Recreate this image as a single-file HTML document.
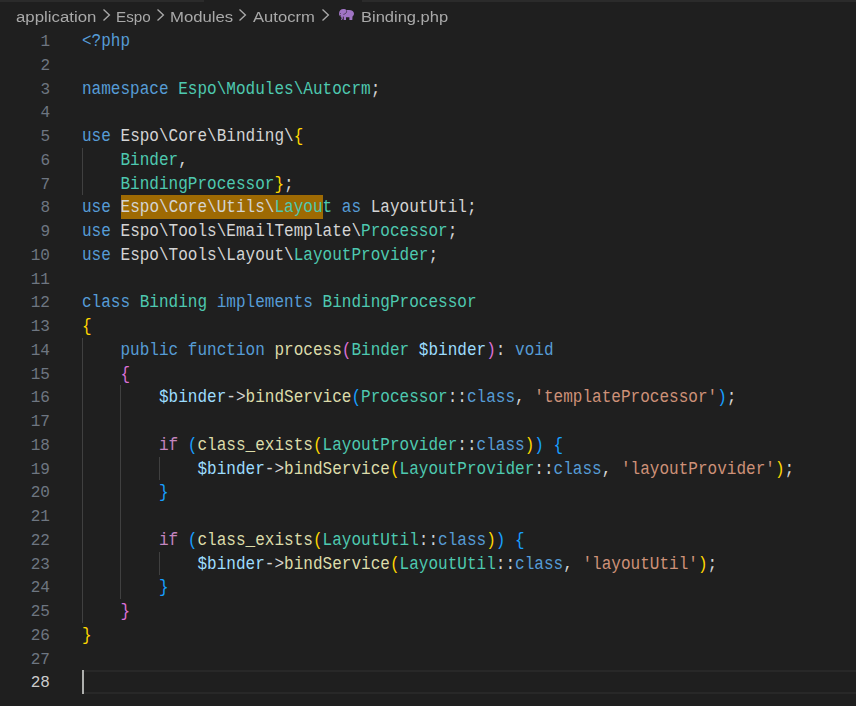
<!DOCTYPE html>
<html><head><meta charset="utf-8"><style>
html,body{margin:0;padding:0;background:#1f1f1f;width:856px;height:706px;overflow:hidden;position:relative}
.topstrip{position:absolute;top:0;height:2px;background:#2b2b2b}
.bc{will-change:transform;position:absolute;top:0;left:0;height:29px;width:856px;font-family:"Liberation Sans",sans-serif;font-size:15.5px;color:#a9a9a9}
.bc span{position:absolute;top:7.6px;transform-origin:0 0;white-space:pre}
.chev{position:absolute;top:8px}
.eleph{position:absolute;left:336px;top:6px}
.ln{position:absolute;left:82.0px;height:23.75px;line-height:23.75px;font-family:"Liberation Mono",monospace;font-size:17.6px;white-space:pre;transform:scaleX(0.91146);transform-origin:0 0}
.hl{}
.hlbox{position:absolute;background:#9e6a03;left:120.50px;width:202.12px;top:195px;height:24px}
.num{position:absolute;left:0;width:50px;text-align:right;height:23.75px;line-height:23.75px;font-family:"Liberation Mono",monospace;font-size:16.04px;color:#6e7681}
.num.act{color:#cccccc}
.guide{position:absolute;width:1px;background:#404040}
.curline{position:absolute;left:84px;right:0;top:670px;height:24px;box-sizing:border-box;border-top:2px solid #282828;border-bottom:2px solid #282828}
.cursor{position:absolute;left:82px;width:2px;top:670px;height:24px;background:#aeafad}
</style></head><body>
<div class="topstrip" style="left:0;width:204px"></div>
<div class="topstrip" style="left:362px;width:494px"></div>
<div class="bc">
<span style="left:16.25px;transform:scaleX(1.084)">application</span><svg class="chev" style="left:101.8px" width="10" height="14" viewBox="0 0 10 14"><path d="M1.5 1.4 L7.4 7 L1.5 12.6" fill="none" stroke="#a9a9a9" stroke-width="1.35"/></svg>
<span style="left:115.9px;transform:scaleX(0.981)">Espo</span><svg class="chev" style="left:155.7px" width="10" height="14" viewBox="0 0 10 14"><path d="M1.5 1.4 L7.4 7 L1.5 12.6" fill="none" stroke="#a9a9a9" stroke-width="1.35"/></svg>
<span style="left:169.95px;transform:scaleX(1.078)">Modules</span><svg class="chev" style="left:238.3px" width="10" height="14" viewBox="0 0 10 14"><path d="M1.5 1.4 L7.4 7 L1.5 12.6" fill="none" stroke="#a9a9a9" stroke-width="1.35"/></svg>
<span style="left:252.64px;transform:scaleX(1.071)">Autocrm</span><svg class="chev" style="left:320.6px" width="10" height="14" viewBox="0 0 10 14"><path d="M1.5 1.4 L7.4 7 L1.5 12.6" fill="none" stroke="#a9a9a9" stroke-width="1.35"/></svg>
<svg class="eleph" width="22" height="17" viewBox="0 0 22 17"><path fill="#a074c4" d="M3.0 7.7 C3.0 5.0 4.9 3.1 7.45 3.1 C8.7 3.1 9.7 3.6 10.3 4.0 L13.0 4.0 C16.0 4.0 18.0 5.5 18.0 7.7 C18.0 8.9 17.3 9.9 16.5 10.4 L16.3 14.0 L13.4 14.0 L13.4 11.3 L10.0 11.3 L10.0 14.0 L7.7 14.0 L7.7 10.8 L6.9 10.4 L6.8 12.8 L5.9 14.0 L4.8 13.5 L5.7 12.4 L5.0 10.6 C3.7 10.0 3.0 9.0 3.0 7.7 Z"/><path d="M10.4 4.3 C10.9 5.6 10.6 7.7 7.4 8.4" fill="none" stroke="#1f1f1f" stroke-opacity="0.8" stroke-width="0.8"/><circle cx="4.4" cy="7.5" r="0.5" fill="#1f1f1f" fill-opacity="0.7"/><circle cx="4.4" cy="9.5" r="0.5" fill="#1f1f1f" fill-opacity="0.7"/></svg>
<span style="left:361.03px;transform:scaleX(1.064)">Binding.php</span>
</div>
<div class="guide" style="left:82px;top:148px;height:47px"></div><div class="guide" style="left:82px;top:338px;height:285px"></div><div class="guide" style="left:120px;top:385px;height:214px"></div><div class="guide" style="left:159px;top:457px;height:23px"></div><div class="guide" style="left:159px;top:552px;height:23px"></div>
<div class="curline"></div>
<div class="hlbox"></div>
<div class="ln" style="top:30px"><span style="color:#569cd6">&lt;?php</span></div><div class="num" style="top:31px">1</div><div class="ln" style="top:54px"></div><div class="num" style="top:55px">2</div><div class="ln" style="top:78px"><span style="color:#569cd6">namespace</span><span style="color:#d4d4d4"> </span><span style="color:#4ec9b0">Espo\Modules\Autocrm</span><span style="color:#d4d4d4">;</span></div><div class="num" style="top:79px">3</div><div class="ln" style="top:101px"></div><div class="num" style="top:102px">4</div><div class="ln" style="top:125px"><span style="color:#569cd6">use</span><span style="color:#d4d4d4"> Espo\Core\Binding\</span><span style="color:#ffd700">{</span></div><div class="num" style="top:126px">5</div><div class="ln" style="top:149px"><span style="color:#d4d4d4">    </span><span style="color:#4ec9b0">Binder</span><span style="color:#d4d4d4">,</span></div><div class="num" style="top:150px">6</div><div class="ln" style="top:173px"><span style="color:#d4d4d4">    </span><span style="color:#4ec9b0">BindingProcessor</span><span style="color:#ffd700">}</span><span style="color:#d4d4d4">;</span></div><div class="num" style="top:174px">7</div><div class="ln" style="top:196px"><span style="color:#569cd6">use</span><span style="color:#d4d4d4"> </span><span style="color:#d4d4d4" class="hl">Espo\Core\Utils\</span><span style="color:#4ec9b0" class="hl">Layou</span><span style="color:#4ec9b0">t</span><span style="color:#d4d4d4"> </span><span style="color:#569cd6">as</span><span style="color:#d4d4d4"> LayoutUtil;</span></div><div class="num" style="top:197px">8</div><div class="ln" style="top:220px"><span style="color:#569cd6">use</span><span style="color:#d4d4d4"> Espo\Tools\EmailTemplate\</span><span style="color:#4ec9b0">Processor</span><span style="color:#d4d4d4">;</span></div><div class="num" style="top:221px">9</div><div class="ln" style="top:244px"><span style="color:#569cd6">use</span><span style="color:#d4d4d4"> Espo\Tools\Layout\</span><span style="color:#4ec9b0">LayoutProvider</span><span style="color:#d4d4d4">;</span></div><div class="num" style="top:245px">10</div><div class="ln" style="top:268px"></div><div class="num" style="top:269px">11</div><div class="ln" style="top:291px"><span style="color:#569cd6">class</span><span style="color:#d4d4d4"> </span><span style="color:#4ec9b0">Binding</span><span style="color:#d4d4d4"> </span><span style="color:#569cd6">implements</span><span style="color:#d4d4d4"> </span><span style="color:#4ec9b0">BindingProcessor</span></div><div class="num" style="top:292px">12</div><div class="ln" style="top:315px"><span style="color:#ffd700">{</span></div><div class="num" style="top:316px">13</div><div class="ln" style="top:339px"><span style="color:#d4d4d4">    </span><span style="color:#569cd6">public</span><span style="color:#d4d4d4"> </span><span style="color:#569cd6">function</span><span style="color:#d4d4d4"> </span><span style="color:#dcdcaa">process</span><span style="color:#da70d6">(</span><span style="color:#4ec9b0">Binder</span><span style="color:#d4d4d4"> </span><span style="color:#9cdcfe">$binder</span><span style="color:#da70d6">)</span><span style="color:#d4d4d4">: </span><span style="color:#569cd6">void</span></div><div class="num" style="top:340px">14</div><div class="ln" style="top:363px"><span style="color:#d4d4d4">    </span><span style="color:#da70d6">{</span></div><div class="num" style="top:364px">15</div><div class="ln" style="top:386px"><span style="color:#d4d4d4">        </span><span style="color:#9cdcfe">$binder</span><span style="color:#d4d4d4">-&gt;</span><span style="color:#dcdcaa">bindService</span><span style="color:#179fff">(</span><span style="color:#4ec9b0">Processor</span><span style="color:#d4d4d4">::</span><span style="color:#569cd6">class</span><span style="color:#d4d4d4">, </span><span style="color:#ce9178">&#x27;templateProcessor&#x27;</span><span style="color:#179fff">)</span><span style="color:#d4d4d4">;</span></div><div class="num" style="top:387px">16</div><div class="ln" style="top:410px"></div><div class="num" style="top:411px">17</div><div class="ln" style="top:434px"><span style="color:#d4d4d4">        </span><span style="color:#c586c0">if</span><span style="color:#d4d4d4"> </span><span style="color:#179fff">(</span><span style="color:#dcdcaa">class_exists</span><span style="color:#ffd700">(</span><span style="color:#4ec9b0">LayoutProvider</span><span style="color:#d4d4d4">::</span><span style="color:#569cd6">class</span><span style="color:#ffd700">)</span><span style="color:#179fff">)</span><span style="color:#d4d4d4"> </span><span style="color:#179fff">{</span></div><div class="num" style="top:435px">18</div><div class="ln" style="top:458px"><span style="color:#d4d4d4">            </span><span style="color:#9cdcfe">$binder</span><span style="color:#d4d4d4">-&gt;</span><span style="color:#dcdcaa">bindService</span><span style="color:#ffd700">(</span><span style="color:#4ec9b0">LayoutProvider</span><span style="color:#d4d4d4">::</span><span style="color:#569cd6">class</span><span style="color:#d4d4d4">, </span><span style="color:#ce9178">&#x27;layoutProvider&#x27;</span><span style="color:#ffd700">)</span><span style="color:#d4d4d4">;</span></div><div class="num" style="top:459px">19</div><div class="ln" style="top:481px"><span style="color:#d4d4d4">        </span><span style="color:#179fff">}</span></div><div class="num" style="top:482px">20</div><div class="ln" style="top:505px"></div><div class="num" style="top:506px">21</div><div class="ln" style="top:529px"><span style="color:#d4d4d4">        </span><span style="color:#c586c0">if</span><span style="color:#d4d4d4"> </span><span style="color:#179fff">(</span><span style="color:#dcdcaa">class_exists</span><span style="color:#ffd700">(</span><span style="color:#4ec9b0">LayoutUtil</span><span style="color:#d4d4d4">::</span><span style="color:#569cd6">class</span><span style="color:#ffd700">)</span><span style="color:#179fff">)</span><span style="color:#d4d4d4"> </span><span style="color:#179fff">{</span></div><div class="num" style="top:530px">22</div><div class="ln" style="top:553px"><span style="color:#d4d4d4">            </span><span style="color:#9cdcfe">$binder</span><span style="color:#d4d4d4">-&gt;</span><span style="color:#dcdcaa">bindService</span><span style="color:#ffd700">(</span><span style="color:#4ec9b0">LayoutUtil</span><span style="color:#d4d4d4">::</span><span style="color:#569cd6">class</span><span style="color:#d4d4d4">, </span><span style="color:#ce9178">&#x27;layoutUtil&#x27;</span><span style="color:#ffd700">)</span><span style="color:#d4d4d4">;</span></div><div class="num" style="top:554px">23</div><div class="ln" style="top:576px"><span style="color:#d4d4d4">        </span><span style="color:#179fff">}</span></div><div class="num" style="top:577px">24</div><div class="ln" style="top:600px"><span style="color:#d4d4d4">    </span><span style="color:#da70d6">}</span></div><div class="num" style="top:601px">25</div><div class="ln" style="top:624px"><span style="color:#ffd700">}</span></div><div class="num" style="top:625px">26</div><div class="ln" style="top:648px"></div><div class="num" style="top:649px">27</div><div class="ln" style="top:671px"></div><div class="num act" style="top:672px">28</div>
<div class="cursor"></div>
</body></html>
